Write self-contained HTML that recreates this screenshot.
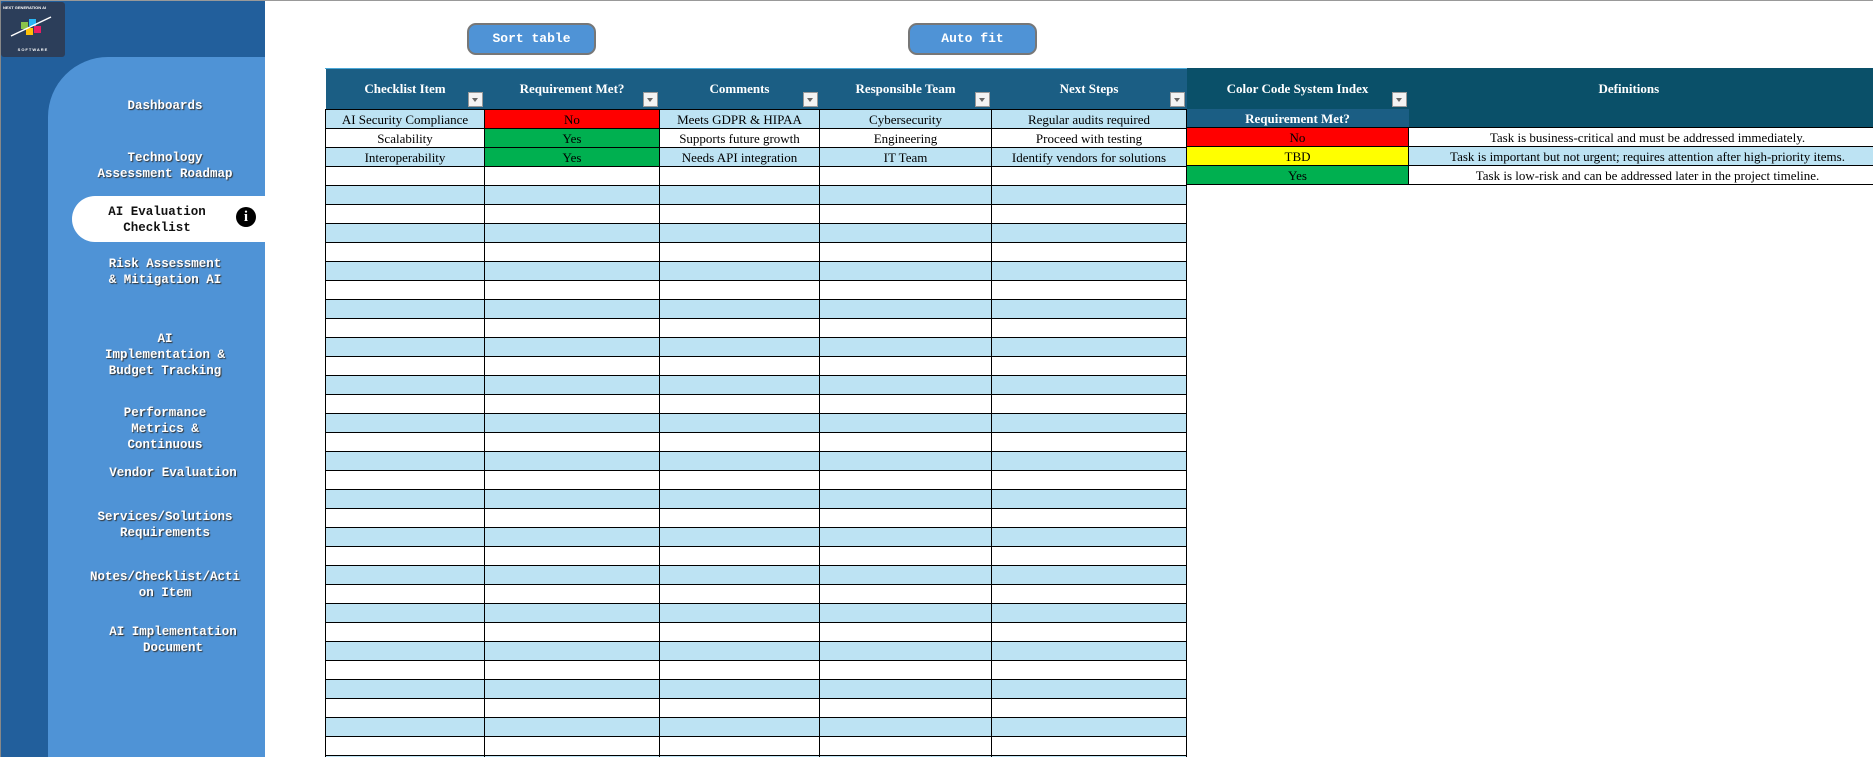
<!DOCTYPE html>
<html><head><meta charset="utf-8"><style>
html,body{margin:0;width:1873px;height:757px;overflow:hidden}
body{background:#fff;position:relative;font-family:"Liberation Serif",serif}
.topline{position:absolute;left:0;top:0;width:1873px;height:1px;background:#999}
.side{position:absolute;left:0;top:1px;width:265px;height:756px;background:#225f9c;border-left:1px solid #888;box-sizing:border-box}
.panel{position:absolute;left:48px;top:57px;width:217px;height:700px;background:#4f93d6;border-top-left-radius:60px}
.logo{position:absolute;left:1px;top:2px;width:64px;height:55px;background:#2c3e5a;border-radius:3px}
.nav{position:absolute;left:70px;width:190px;text-align:center;font-family:"Liberation Mono",monospace;font-weight:bold;font-size:12.5px;line-height:16px;color:#fff;text-shadow:1px 1px 1px #333}
.sel{position:absolute;left:72px;top:196px;width:200px;height:46px;background:#fff;border-radius:23px 0 0 23px}
.sel .nav{color:#111;text-shadow:none;left:0;width:170px}
.info{position:absolute;left:236px;top:207px;width:20px;height:20px;border-radius:50%;background:#000;color:#fff;font:bold 15px "Liberation Serif",serif;text-align:center;line-height:20px}
.btn{position:absolute;top:23px;width:125px;height:28px;background:#4f93d6;border:2px solid #777;border-radius:9px;color:#fff;font:bold 13px "Liberation Mono",monospace;text-align:center;line-height:28px}
table{position:absolute;border-collapse:collapse;table-layout:fixed;font-size:13px}
td{height:18px;padding:0;border:1px solid #000;text-align:center;white-space:nowrap;overflow:hidden;line-height:17px}
tr:nth-child(even) td{background:#bde3f3}
th{background:#1b5e84;color:#fff;font-weight:bold;font-size:13px;height:41px;position:relative;padding:0;vertical-align:middle;border:none}
.dd{position:absolute;right:2px;bottom:2px;width:13px;height:13px;background:#f3f3f3;border:1px solid #999}
.dd:after{content:"";position:absolute;left:3px;top:5px;border-left:3.5px solid transparent;border-right:3.5px solid transparent;border-top:4px solid #666}
.r{background:#ff0000!important}.g{background:#00b050!important}.y{background:#ffff00!important}
</style></head><body>
<div class="topline"></div>
<div class="side"></div>
<div class="panel"></div>
<div class="logo"><div style="position:absolute;top:3px;left:2px;font:bold 4px 'Liberation Sans';color:#fff">NEXT GENERATION AI</div>
<svg style="position:absolute;left:8px;top:12px" width="48" height="30"><rect x="12" y="8" width="7" height="7" fill="#8bc34a"/><rect x="20" y="5" width="7" height="7" fill="#29b6f6"/><rect x="17" y="14" width="7" height="7" fill="#ffc107"/><rect x="25" y="12" width="7" height="7" fill="#e91e63"/><line x1="2" y1="22" x2="42" y2="3" stroke="#fff" stroke-width="1.5"/></svg>
<div style="position:absolute;top:45px;width:64px;text-align:center;font:bold 4px 'Liberation Sans';color:#fff;letter-spacing:1px">SOFTWARE</div></div>
<div class="nav" style="top:98px">Dashboards</div>
<div class="nav" style="top:150px">Technology<br>Assessment Roadmap</div>
<div class="sel"><div class="nav" style="top:8px">AI Evaluation<br>Checklist</div></div>
<div class="info">i</div>
<div class="nav" style="top:256px">Risk Assessment<br>&amp; Mitigation AI</div>
<div class="nav" style="top:331px">AI<br>Implementation &amp;<br>Budget Tracking</div>
<div class="nav" style="top:405px">Performance<br>Metrics &amp;<br>Continuous</div>
<div class="nav" style="top:465px;left:78px">Vendor Evaluation</div>
<div class="nav" style="top:509px">Services/Solutions<br>Requirements</div>
<div class="nav" style="top:569px">Notes/Checklist/Acti<br>on Item</div>
<div class="nav" style="top:624px;left:78px">AI Implementation<br>Document</div>
<div class="btn" style="left:467px">Sort table</div>
<div class="btn" style="left:908px">Auto fit</div>
<table style="left:325px;top:68px;width:861px">
<colgroup><col style="width:159px"><col style="width:175px"><col style="width:160px"><col style="width:172px"><col style="width:195px"></colgroup>
<tr><th>Checklist Item<span class="dd"></span></th><th>Requirement Met?<span class="dd"></span></th><th>Comments<span class="dd"></span></th><th>Responsible Team<span class="dd"></span></th><th>Next Steps<span class="dd"></span></th></tr>
<tr><td>AI Security Compliance</td><td class="r">No</td><td>Meets GDPR &amp; HIPAA</td><td>Cybersecurity</td><td>Regular audits required</td></tr>
<tr><td>Scalability</td><td class="g">Yes</td><td>Supports future growth</td><td>Engineering</td><td>Proceed with testing</td></tr>
<tr><td>Interoperability</td><td class="g">Yes</td><td>Needs API integration</td><td>IT Team</td><td>Identify vendors for solutions</td></tr>
<tr><td></td><td></td><td></td><td></td><td></td></tr><tr><td></td><td></td><td></td><td></td><td></td></tr>
<tr><td></td><td></td><td></td><td></td><td></td></tr><tr><td></td><td></td><td></td><td></td><td></td></tr>
<tr><td></td><td></td><td></td><td></td><td></td></tr><tr><td></td><td></td><td></td><td></td><td></td></tr>
<tr><td></td><td></td><td></td><td></td><td></td></tr><tr><td></td><td></td><td></td><td></td><td></td></tr>
<tr><td></td><td></td><td></td><td></td><td></td></tr><tr><td></td><td></td><td></td><td></td><td></td></tr>
<tr><td></td><td></td><td></td><td></td><td></td></tr><tr><td></td><td></td><td></td><td></td><td></td></tr>
<tr><td></td><td></td><td></td><td></td><td></td></tr><tr><td></td><td></td><td></td><td></td><td></td></tr>
<tr><td></td><td></td><td></td><td></td><td></td></tr><tr><td></td><td></td><td></td><td></td><td></td></tr>
<tr><td></td><td></td><td></td><td></td><td></td></tr><tr><td></td><td></td><td></td><td></td><td></td></tr>
<tr><td></td><td></td><td></td><td></td><td></td></tr><tr><td></td><td></td><td></td><td></td><td></td></tr>
<tr><td></td><td></td><td></td><td></td><td></td></tr><tr><td></td><td></td><td></td><td></td><td></td></tr>
<tr><td></td><td></td><td></td><td></td><td></td></tr><tr><td></td><td></td><td></td><td></td><td></td></tr>
<tr><td></td><td></td><td></td><td></td><td></td></tr><tr><td></td><td></td><td></td><td></td><td></td></tr>
<tr><td></td><td></td><td></td><td></td><td></td></tr><tr><td></td><td></td><td></td><td></td><td></td></tr>
<tr><td></td><td></td><td></td><td></td><td></td></tr><tr><td></td><td></td><td></td><td></td><td></td></tr>
<tr><td></td><td></td><td></td><td></td><td></td></tr><tr><td></td><td></td><td></td><td></td><td></td></tr>
</table>
<div style="position:absolute;left:325px;top:68px;width:1548px;height:1px;background:#4aa8d8"></div>
<table style="left:1186px;top:68px;width:700px">
<colgroup><col style="width:222px"><col style="width:478px"></colgroup>
<tr><th style="background:#0a5069">Color Code System Index<span class="dd"></span></th><th style="background:#0a5069;text-align:left;padding-left:190px">Definitions</th></tr>
<tr><td style="background:#1b5e84;color:#fff;font-weight:bold;border:none">Requirement Met?</td><td style="background:#0a5069;border:none"></td></tr>
<tr><td class="r">No</td><td style="background:#fff">Task is business-critical and must be addressed immediately.</td></tr>
<tr><td class="y">TBD</td><td>Task is important but not urgent; requires attention after high-priority items.</td></tr>
<tr><td class="g">Yes</td><td style="background:#fff">Task is low-risk and can be addressed later in the project timeline.</td></tr>
</table>
</body></html>
